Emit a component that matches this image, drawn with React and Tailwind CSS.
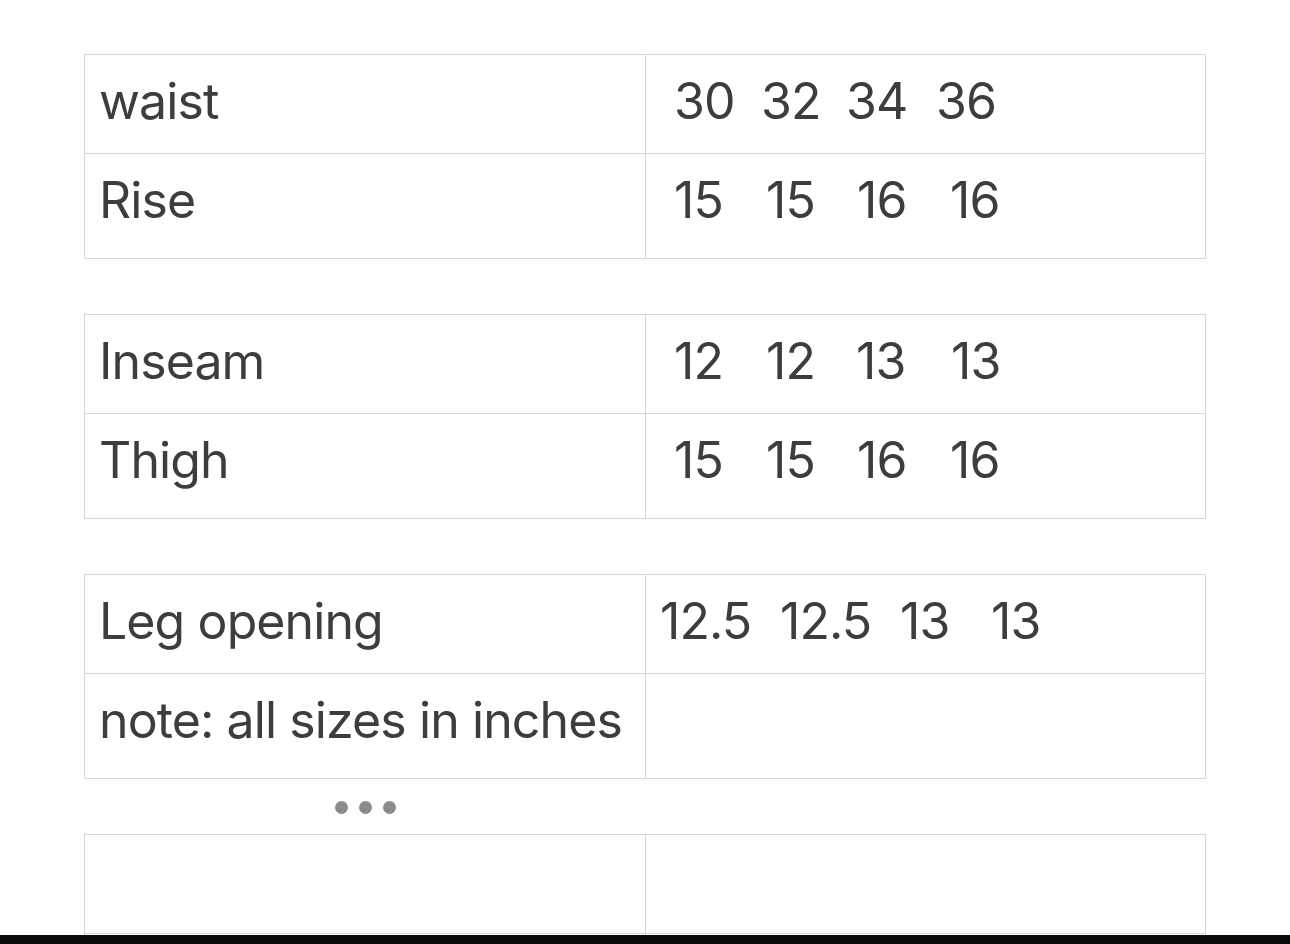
const font = { fontFamily: '"Inter", "Roboto", sans-serif' };

function Row({ label, nums, widths, tall, last, pad }) {
  return (
    <div
      className={`grid grid-cols-[561px_559px] ${tall ? "h-[104px]" : "h-[99px]"} ${last ? "" : "border-b border-[#d6d6d6]"}`}
    >
      <div className="border-r border-[#d6d6d6] pl-[14px] pt-[16px] text-[50px] leading-[60px] tracking-[-0.9px] text-[#3d3d3d] whitespace-nowrap">
        {label}
      </div>
      <div className={`flex pt-[16px] text-[50px] leading-[60px] tracking-[-0.9px] text-[#3d3d3d] ${pad}`}>
        {nums &&
          nums.map((n, i) => (
            <span key={i} className={`shrink-0 ${widths[i] || ""}`}>
              {n}
            </span>
          ))}
      </div>
    </div>
  );
}

function Table({ children, className = "" }) {
  return (
    <div className={`ml-[84px] w-[1122px] border border-[#d6d6d6] ${className}`}>{children}</div>
  );
}

export default function App() {
  return (
    <div className="w-[1290px] h-[944px] bg-white flex flex-col" style={font}>
      <div className="h-[935px] overflow-hidden pt-[54px]">
        <Table>
          <Row label="waist" nums={["30", "32", "34", "36"]} widths={["w-[87px]", "w-[85px]", "w-[90px]", ""]} pad="pl-[28px]" />
          <Row label="Rise" nums={["15", "15", "16", "16"]} widths={["w-[92px]", "w-[91px]", "w-[93px]", ""]} tall last pad="pl-[28px]" />
        </Table>
        <Table className="mt-[55px]">
          <Row label="Inseam" nums={["12", "12", "13", "13"]} widths={["w-[92px]", "w-[90px]", "w-[95px]", ""]} pad="pl-[28px]" />
          <Row label="Thigh" nums={["15", "15", "16", "16"]} widths={["w-[92px]", "w-[91px]", "w-[93px]", ""]} tall last pad="pl-[28px]" />
        </Table>
        <Table className="mt-[55px]">
          <Row label="Leg opening" nums={["12.5", "12.5", "13", "13"]} widths={["w-[120px]", "w-[120px]", "w-[91px]", ""]} pad="pl-[14px]" />
          <Row label="note: all sizes in inches" tall last pad="" />
        </Table>
        <div className="ml-[84px] w-[562px] h-[55px] pt-[1px] flex items-center justify-center gap-[11px]">
          <span className="w-[13px] h-[13px] rounded-full bg-[#8c8c8c]" />
          <span className="w-[13px] h-[13px] rounded-full bg-[#8c8c8c]" />
          <span className="w-[13px] h-[13px] rounded-full bg-[#8c8c8c]" />
        </div>
        <Table>
          <Row label="" tall={false} pad="" />
          <Row label="" tall last pad="" />
        </Table>
      </div>
      <div className="h-[9px] bg-[#0a0a0a]" />
    </div>
  );
}
